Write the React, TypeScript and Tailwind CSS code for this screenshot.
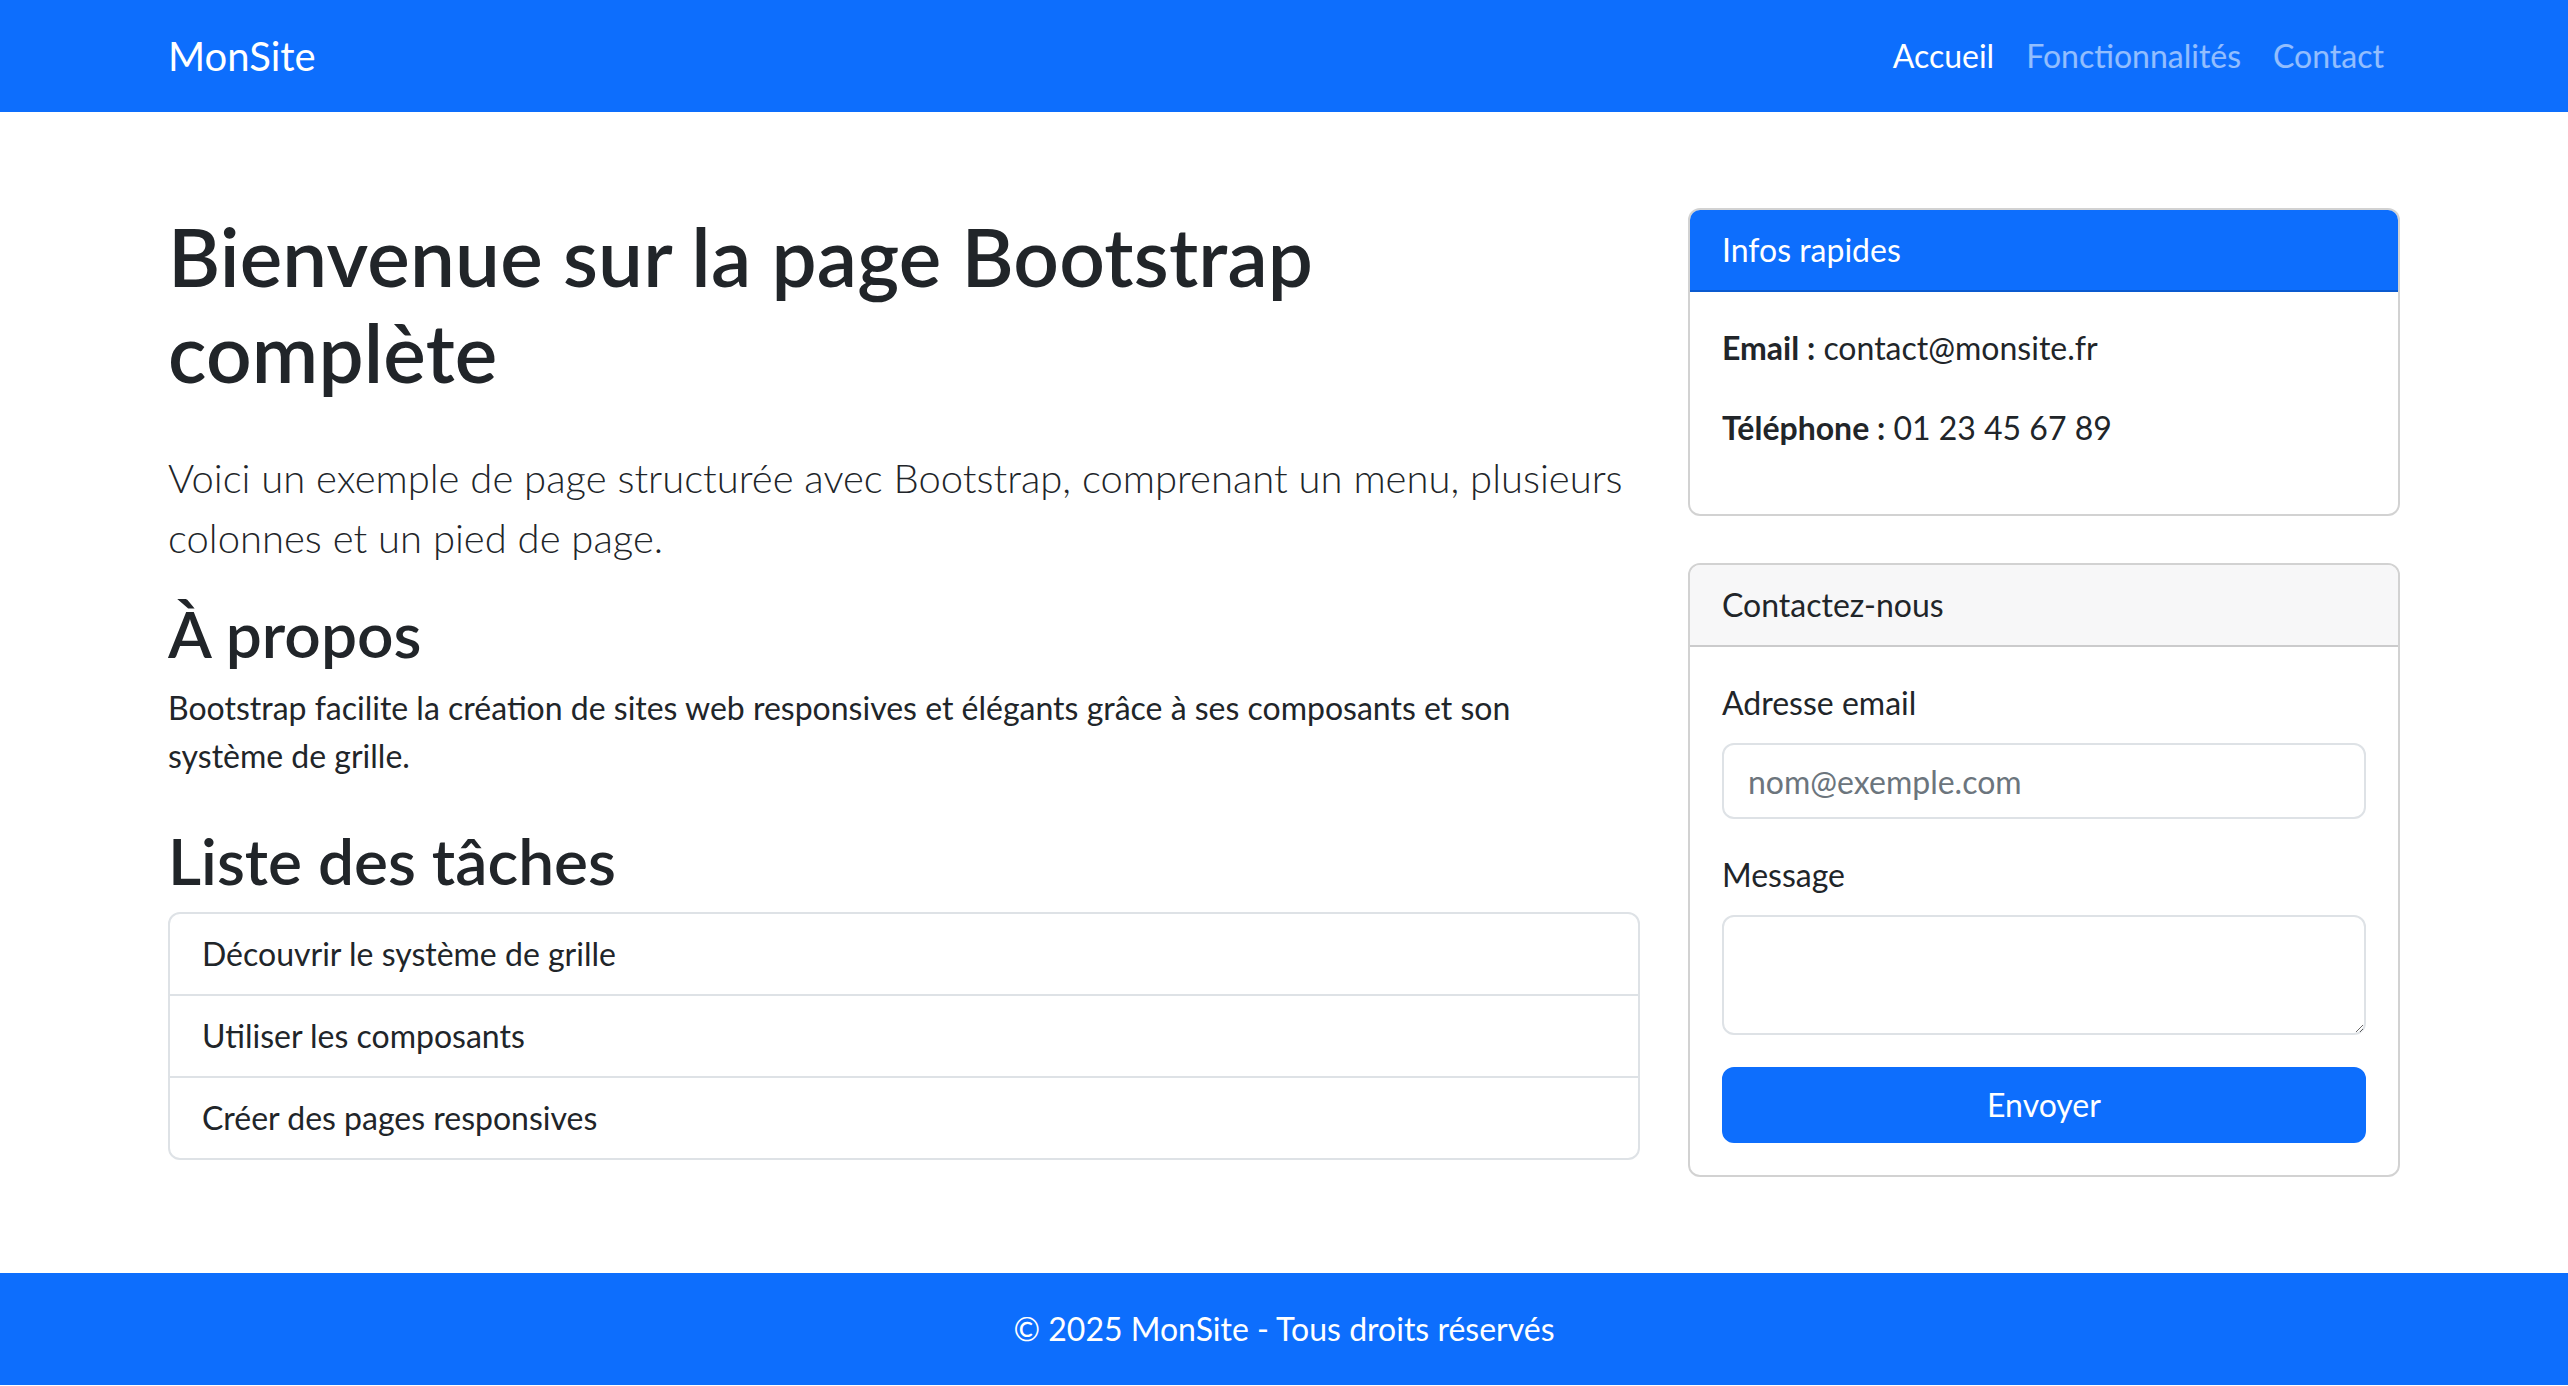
import React from 'react';

const NAV_LINKS = [
  { label: 'Accueil', active: true },
  { label: 'Fonctionnalités', active: false },
  { label: 'Contact', active: false },
];

const TASKS = ['Découvrir le système de grille', 'Utiliser les composants', 'Créer des pages responsives'];

export default function App() {
  return (
    <div className="min-h-screen bg-white text-[#212529] font-[Lato,'Open_Sans',sans-serif] flex flex-col">
      {/* Navbar */}
      <nav className="bg-[#0d6efd] h-[112px] flex items-center">
        <div className="w-[2232px] mx-auto flex items-center justify-between">
          <a className="text-white text-[40px] leading-[60px]">MonSite</a>
          <ul className="flex items-center">
            {NAV_LINKS.map((l) => (
              <li key={l.label}>
                <a
                  className={`px-[16px] text-[32px] leading-[48px] ${l.active ? 'text-white' : 'text-white/55'}`}
                >
                  {l.label}
                </a>
              </li>
            ))}
          </ul>
        </div>
      </nav>

      {/* Main */}
      <main className="w-[2232px] mx-auto mt-[96px] flex gap-[48px] items-start">
        <section className="w-[1472px]">
          <h1 className="text-[80px] font-semibold leading-[1.2] mb-[48px] tracking-[0.2px]">
            Bienvenue sur la page Bootstrap complète
          </h1>
          <p className="text-[40px] font-light leading-[1.5] mb-[28px]">
            Voici un exemple de page structurée avec Bootstrap, comprenant un menu, plusieurs colonnes et un pied de
            page.
          </p>
          <h2 className="text-[64px] font-semibold leading-[1.2] mb-[11px]">À propos</h2>
          <p className="text-[32px] leading-[1.5] mb-[43px]">
            Bootstrap facilite la création de sites web responsives et élégants grâce à ses composants et son
            <br />
            système de grille.
          </p>
          <h2 className="text-[64px] font-semibold leading-[1.2] mb-[12px]">Liste des tâches</h2>
          <ul className="border-2 border-[#dee2e6] rounded-[12px]">
            {TASKS.map((t, i) => (
              <li
                key={t}
                className={`px-[32px] py-[16px] text-[32px] leading-[48px] ${i > 0 ? 'border-t-2 border-[#dee2e6]' : ''}`}
              >
                {t}
              </li>
            ))}
          </ul>
        </section>

        <aside className="w-[712px] flex flex-col gap-[47px]">
          {/* Infos rapides */}
          <div className="border-2 border-black/[0.175] rounded-[12px] overflow-hidden">
            <div className="bg-[#0d6efd] text-white px-[32px] py-[16px] text-[32px] leading-[48px] border-b-2 border-black/[0.175]">
              Infos rapides
            </div>
            <div className="p-[32px] text-[32px] leading-[48px]">
              <p className="mb-[32px]">
                <strong className="font-bold">Email :</strong> contact@monsite.fr
              </p>
              <p className="mb-[30px]">
                <strong className="font-bold">Téléphone :</strong> 01 23 45 67 89
              </p>
            </div>
          </div>

          {/* Contact form */}
          <div className="border-2 border-black/[0.175] rounded-[12px] overflow-hidden">
            <div className="bg-[#f7f7f8] px-[32px] py-[16px] text-[32px] leading-[48px] border-b-2 border-black/[0.175]">
              Contactez-nous
            </div>
            <form className="p-[32px] text-[32px] leading-[48px]">
              <label className="block mb-[16px]">Adresse email</label>
              <input
                type="email"
                placeholder="nom@exemple.com"
                className="block w-full h-[76px] mb-[32px] px-[24px] border-2 border-[#dee2e6] rounded-[12px] text-[32px] placeholder-[#6c757d] outline-none"
              />
              <label className="block mb-[16px]">Message</label>
              <textarea
                rows={2}
                className="block w-full h-[120px] mb-[32px] px-[24px] py-[12px] border-2 border-[#dee2e6] rounded-[12px] text-[32px] outline-none"
              />
              <button
                type="button"
                className="w-full h-[76px] rounded-[12px] bg-[#0d6efd] border-2 border-[#0d6efd] text-white text-[32px]"
              >
                Envoyer
              </button>
            </form>
          </div>
        </aside>
      </main>

      {/* Footer */}
      <footer className="mt-[96px] bg-[#0d6efd] text-white text-center py-[32px] text-[32px] leading-[48px]">
        © 2025 MonSite - Tous droits réservés
      </footer>
    </div>
  );
}
